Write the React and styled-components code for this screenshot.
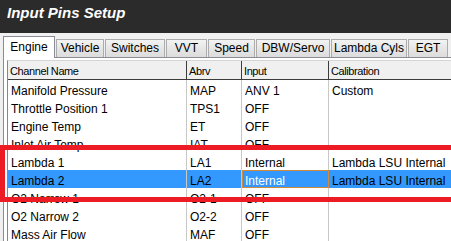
import React from 'react';
import styled, { createGlobalStyle } from 'styled-components';

const GlobalStyle = createGlobalStyle`
  html, body {
    margin: 0;
    padding: 0;
    background: #f0f0f0;
  }
  body {
    font-family: "Liberation Sans", Arial, sans-serif;
  }
`;

const tabs = [
  { label: 'Engine', width: 52 },
  { label: 'Vehicle', width: 48 },
  { label: 'Switches', width: 60 },
  { label: 'VVT', width: 41 },
  { label: 'Speed', width: 47 },
  { label: 'DBW/Servo', width: 74 },
  { label: 'Lambda Cyls', width: 76 },
  { label: 'EGT', width: 40 },
];

const columns = ['Channel Name', 'Abrv', 'Input', 'Calibration'];

const pins = [
  { name: 'Manifold Pressure', abrv: 'MAP', input: 'ANV 1', cal: 'Custom' },
  { name: 'Throttle Position 1', abrv: 'TPS1', input: 'OFF', cal: '' },
  { name: 'Engine Temp', abrv: 'ET', input: 'OFF', cal: '' },
  { name: 'Inlet Air Temp', abrv: 'IAT', input: 'OFF', cal: '' },
  { name: 'Lambda 1', abrv: 'LA1', input: 'Internal', cal: 'Lambda LSU Internal' },
  { name: 'Lambda 2', abrv: 'LA2', input: 'Internal', cal: 'Lambda LSU Internal', selected: true },
  { name: 'O2 Narrow 1', abrv: 'O2-1', input: 'OFF', cal: '' },
  { name: 'O2 Narrow 2', abrv: 'O2-2', input: 'OFF', cal: '' },
  { name: 'Mass Air Flow', abrv: 'MAF', input: 'OFF', cal: '' },
];

const App = () => {
  return (
    <>
      <GlobalStyle />
      <Window>
        <TitleBar>
          <Title>Input Pins Setup</Title>
        </TitleBar>
        <Body>
          <TabStrip>
            {tabs.map((t, i) => (
              <Tab key={t.label} active={i === 0} width={t.width}>{t.label}</Tab>
            ))}
          </TabStrip>
          <Panel>
            <Table>
              <HeaderRow>
                {columns.map((c) => (
                  <HeaderCell key={c}>{c}</HeaderCell>
                ))}
              </HeaderRow>
              {pins.map((p) => (
                <Row key={p.name} selected={p.selected}>
                  <Cell>{p.name}</Cell>
                  <Cell>{p.abrv}</Cell>
                  <Cell focused={p.selected}>{p.input}</Cell>
                  <Cell>{p.cal}</Cell>
                </Row>
              ))}
            </Table>
          </Panel>
          <Highlight />
        </Body>
      </Window>
    </>
  );
};

const Window = styled.div`
  width: 451px;
  height: 241px;
  overflow: hidden;
  background: #f0f0f0;
`;

const TitleBar = styled.div`
  height: 33px;
  background: #2b2b2b;
  display: flex;
  align-items: flex-start;
  padding-left: 7px;
  box-sizing: border-box;
`;

const Title = styled.div`
  color: #ffffff;
  font-family: "Liberation Sans", Arial, sans-serif;
  font-weight: bold;
  font-style: italic;
  font-size: 15px;
  line-height: 15px;
  margin-top: 5px;
`;

const Body = styled.div`
  position: relative;
  width: 480px;
  padding-top: 3px;
  padding-left: 3px;
`;

const TabStrip = styled.div`
  display: flex;
  align-items: flex-end;
  gap: 1px;
  height: 21px;
`;

const Tab = styled.div`
  box-sizing: border-box;
  flex: 0 0 ${(p) => p.width}px;
  font-size: 12px;
  color: #000;
  white-space: nowrap;
  text-align: center;
  border: 1px solid ${(p) => (p.active ? '#898c95' : '#acacac')};
  border-bottom: none;
  height: ${(p) => (p.active ? '22px' : '18px')};
  line-height: ${(p) => (p.active ? '20px' : '17px')};
  margin-bottom: ${(p) => (p.active ? '-1px' : '0')};
  position: relative;
  z-index: ${(p) => (p.active ? 1 : 0)};
  background: ${(p) =>
    p.active ? '#ffffff' : 'linear-gradient(#f3f3f3, #e6e6e6 50%, #dcdcdc)'};
`;

const Panel = styled.div`
  border: 1px solid #898c95;
  border-right: none;
  background: #ffffff;
  padding: 2px 0 0 3px;
  height: 200px;
`;

const Table = styled.div`
  border-left: 1px solid #828790;
  border-top: 1px solid #d5d5d5;
  background: #ffffff;
`;

const grid = `
  display: grid;
  grid-template-columns: 179px 55px 87px 1fr;
`;

const HeaderRow = styled.div`
  ${grid}
  height: 18px;
  background: #f0f0f0;
  border-bottom: 1px solid #3c3c3c;
`;

const HeaderCell = styled.div`
  box-sizing: border-box;
  font-size: 11px;
  letter-spacing: -0.4px;
  color: #000;
  line-height: 18px;
  padding: 1px 0 0 2px;
  border-right: 1px solid #3c3c3c;
  white-space: nowrap;
  overflow: hidden;
`;

const Row = styled.div`
  ${grid}
  height: 18px;
  background: ${(p) => (p.selected ? '#3399ff' : '#ffffff')};
`;

const Cell = styled.div`
  box-sizing: border-box;
  font-size: 12px;
  line-height: 18px;
  padding: 2px 0 0 3px;
  color: ${(p) => (p.focused ? '#ffffff' : '#000000')};
  border-right: 1px solid #c8c8c8;
  white-space: nowrap;
  overflow: hidden;
  ${(p) => p.focused && 'outline: 1px solid #d08a3c; outline-offset: -1px;'}
`;

const Highlight = styled.div`
  position: absolute;
  left: 0;
  top: 112px;
  width: 470px;
  height: 57px;
  box-sizing: border-box;
  border: 5px solid #ed1c24;
  pointer-events: none;
`;

export default App;
